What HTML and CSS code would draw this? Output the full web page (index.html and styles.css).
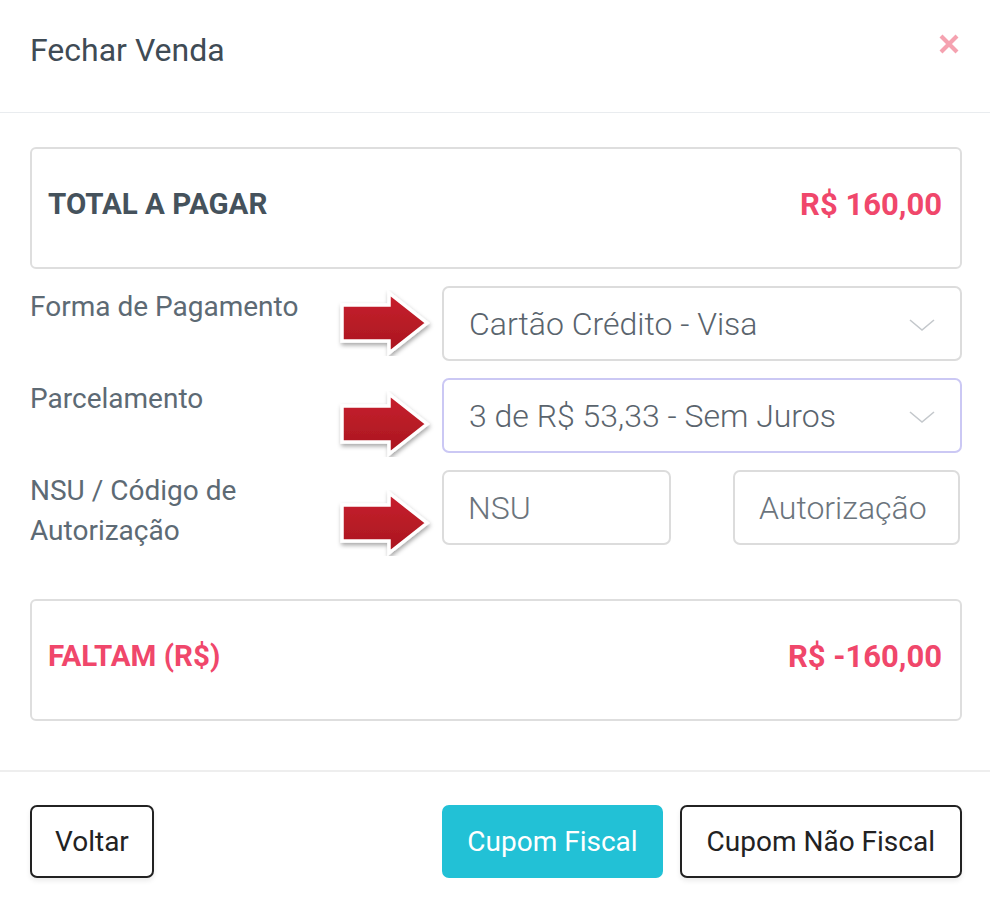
FILE: index.html
```html
<!DOCTYPE html>
<html lang="pt-BR">
<head>
    <meta charset="UTF-8">
    <title>Fechar Venda</title>
    <link rel="stylesheet" href="styles.css">
</head>
<body>
<div class="modal">
    <div class="modal-header">
        <h4 class="modal-title">Fechar Venda</h4>
        <button class="close" type="button">
            <svg width="22" height="20" viewBox="0 0 22 20"><path d="M3 2 L19 18 M19 2 L3 18" stroke="currentColor" stroke-width="4.2" stroke-linecap="butt"/></svg>
        </button>
    </div>

    <div class="modal-body">
        <div class="summary">
            <span class="summary-label">TOTAL A PAGAR</span>
            <span class="summary-value">R$ 160,00</span>
        </div>

        <div class="form-row">
            <label class="form-label">Forma de Pagamento</label>
            <span class="pointer pointer-1">
                <svg width="104" height="66" viewBox="0 0 104 66"><use href="#arrow"/></svg>
            </span>
            <div class="select">
                <span>Cartão Crédito - Visa</span>
                <svg class="chevron" width="28" height="16" viewBox="0 0 28 16"><path d="M2 3 L14 13 L26 3" fill="none" stroke="currentColor" stroke-width="1.6"/></svg>
            </div>
        </div>

        <div class="form-row">
            <label class="form-label">Parcelamento</label>
            <span class="pointer pointer-2">
                <svg width="104" height="66" viewBox="0 0 104 66"><use href="#arrow"/></svg>
            </span>
            <div class="select select-focus">
                <span>3 de R$ 53,33 - Sem Juros</span>
                <svg class="chevron" width="28" height="16" viewBox="0 0 28 16"><path d="M2 3 L14 13 L26 3" fill="none" stroke="currentColor" stroke-width="1.6"/></svg>
            </div>
        </div>

        <div class="form-row form-row-last">
            <label class="form-label">NSU / Código de Autorização</label>
            <span class="pointer pointer-3">
                <svg width="104" height="66" viewBox="0 0 104 66"><use href="#arrow"/></svg>
            </span>
            <div class="input-pair">
                <input class="input" type="text" placeholder="NSU">
                <input class="input" type="text" placeholder="Autorização">
            </div>
        </div>

        <div class="summary summary-due">
            <span class="summary-label">FALTAM (R$)</span>
            <span class="summary-value">R$ -160,00</span>
        </div>
    </div>

    <div class="modal-footer">
        <button class="btn btn-outline" type="button">Voltar</button>
        <div class="btn-group">
            <button class="btn btn-info" type="button">Cupom Fiscal</button>
            <button class="btn btn-outline btn-wide" type="button">Cupom Não Fiscal</button>
        </div>
    </div>
</div>

<svg class="defs" width="0" height="0">
    <defs>
        <linearGradient id="arrowFill" x1="0" y1="0" x2="0" y2="1">
            <stop offset="0" stop-color="#c8202e"/>
            <stop offset="1" stop-color="#a9161f"/>
        </linearGradient>
        <filter id="arrowShadow" x="-20%" y="-20%" width="140%" height="150%">
            <feDropShadow dx="1" dy="2.5" stdDeviation="2.2" flood-color="#000" flood-opacity="0.35"/>
        </filter>
        <g id="arrow">
            <polygon points="8,15 55,15 55,3 93,33 55,63 55,51 8,51" fill="url(#arrowFill)" stroke="#fff" stroke-width="3.5" stroke-linejoin="miter" filter="url(#arrowShadow)"/>
        </g>
    </defs>
</svg>
</body>
</html>
```

FILE: styles.css
```css
*{ box-sizing: border-box; }
body{ margin: 0; background: #fff; font-family: Roboto, "Liberation Sans", Arial, sans-serif; color: #5d6a74; }
.defs{ position: absolute; width: 0; height: 0; overflow: hidden; }

.modal{ width: 990px; height: 906px; background: #fff; }

.modal-header{ height: 113px; display: flex; justify-content: space-between; align-items: flex-start;
    padding: 30px 30px 0 30px; border-bottom: 1px solid #e9ecef; }
.modal-title{ margin: 0; font-size: 32px; font-weight: 400; color: #3f4b55; line-height: 40px; }
.close{ border: 0; background: none; padding: 0; margin-top: 4px; color: #f5a2b0; cursor: pointer; }

.modal-body{ padding: 34px 28px 49px 30px; }

.summary{ height: 122px; border: 2px solid #dedede; border-radius: 6px; display: flex;
    justify-content: space-between; align-items: center; padding: 0 18px 8px 16px; margin-bottom: 17px; }
.summary-label{ font-size: 29.5px; font-weight: 700; color: #45525c; }
.summary-value{ font-size: 31px; font-weight: 700; color: #f0476b; }
.summary-due{ margin: 48px 0 0 0; }
.summary-due .summary-label{ color: #f0476b; }

.form-row{ display: grid; grid-template-columns: 300px 112px 1fr; margin-bottom: 17px; }
.form-row-last{ margin-bottom: 0; }
.form-label{ font-size: 28px; line-height: 40px; color: #5d6a74; margin-top: 1px; }
.pointer{ display: block; height: 0; overflow: visible; padding-left: 4px; }
.pointer-1{ padding-top: 4px; }
.pointer-2{ padding-top: 13px; }
.pointer-3{ padding-top: 20px; }

.select{ height: 75px; border: 2px solid #dcdcdc; border-radius: 7px; display: flex; align-items: center;
    justify-content: space-between; padding: 0 24px 0 25px; font-size: 32px; font-weight: 300; color: #5a646d; }
.select-focus{ border-color: #cbc8f4; }
.chevron{ color: #c4c8cc; margin-top: 2px; }

.input-pair{ display: grid; grid-template-columns: 229px 227px; gap: 62px; }
.input{ height: 75px; width: 100%; border: 2px solid #dcdcdc; border-radius: 7px; padding: 0 24px;
    font-family: inherit; font-size: 32px; font-weight: 300; color: #5a646d; outline: none; }
.input::placeholder{ color: #6b747c; }

.modal-footer{ border-top: 2px solid #eeeeee; padding: 33px 28px 0 30px; display: flex; justify-content: space-between; }
.btn-group{ display: flex; gap: 17px; }
.btn{ height: 73px; border-radius: 7px; font-family: inherit; font-size: 28px; font-weight: 400;
    padding: 0 23px; white-space: nowrap; cursor: pointer; }
.btn-wide{ padding: 0 25px; }
.btn-outline{ background: #fff; border: 2px solid #222; color: #222; box-shadow: 0 3px 5px rgba(0,0,0,0.08); }
.btn-info{ background: #22c1d6; border: 2px solid #22c1d6; color: #fff; }
```
